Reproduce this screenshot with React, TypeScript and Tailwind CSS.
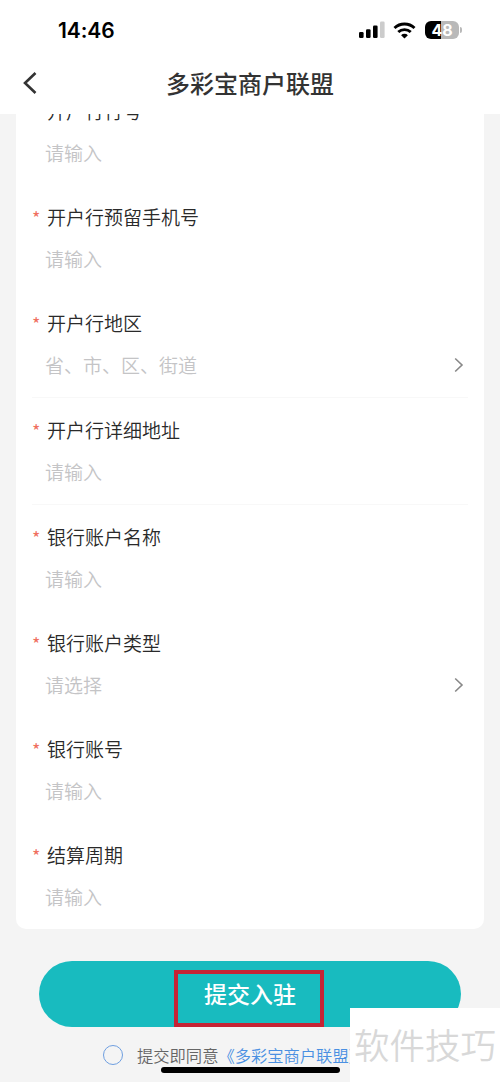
import React from 'react';

interface Field {
  label: string;
  placeholder: string;
  select?: boolean;
  divider?: boolean;
}

const fields: Field[] = [
  { label: '开户行行号', placeholder: '请输入' },
  { label: '开户行预留手机号', placeholder: '请输入' },
  { label: '开户行地区', placeholder: '省、市、区、街道', select: true, divider: true },
  { label: '开户行详细地址', placeholder: '请输入', divider: true },
  { label: '银行账户名称', placeholder: '请输入' },
  { label: '银行账户类型', placeholder: '请选择', select: true },
  { label: '银行账号', placeholder: '请输入' },
  { label: '结算周期', placeholder: '请输入' },
];

function StatusBar() {
  return (
    <div className="flex h-[60px] items-center justify-between pl-[58px] pr-[38px]">
      <span className="font-['Inter','Liberation_Sans',sans-serif] text-[21px] font-semibold leading-none tracking-[-0.1px] text-black">
        14:46
      </span>
      <div className="flex items-center">
        <svg width="26" height="18" viewBox="0 0 26 18">
          <rect x="0" y="11" width="4.6" height="6" rx="1.2" fill="#000" />
          <rect x="7" y="8.2" width="4.6" height="8.8" rx="1.2" fill="#000" />
          <rect x="14" y="4.6" width="4.6" height="12.4" rx="1.2" fill="#000" />
          <rect x="21" y="0.6" width="4.6" height="16.4" rx="1.2" fill="#ccc" />
        </svg>
        <svg className="ml-2" width="23" height="17" viewBox="0 0 24 18" fill="none" stroke="#000" strokeWidth="3">
          <path d="M1.4 6.4a15.2 15.2 0 0 1 21.2 0" />
          <path d="M5.4 10.7a9.5 9.5 0 0 1 13.2 0" />
          <path d="M12 17.4l-3.6-3.5a5.1 5.1 0 0 1 7.2 0z" fill="#000" stroke="none" />
        </svg>
        <div className="ml-[9px] flex h-[18px] w-[34px] items-center justify-center rounded-[6px] bg-linear-to-r from-black from-48% to-[#b9b9b9] to-48% font-['Inter','Liberation_Sans',sans-serif] text-[16px] font-bold leading-none text-white">
          48
        </div>
        <div className="ml-px h-[6px] w-[2px] rounded-r-full bg-[#b9b9b9]" />
      </div>
    </div>
  );
}

function FieldRow({ label, placeholder, select, divider }: Field) {
  return (
    <div className={`pt-[11px] pb-2.5 ${divider ? 'border-b border-[#f8f8f8]' : ''}`}>
      <div className="flex h-[42px] items-center text-[19px] font-[350] text-[#2a2a2a]">
        <span className="w-[15px] text-[18px] font-normal leading-none text-[#f0705f]">*</span>
        {label}
      </div>
      <div className="flex h-[43px] items-center justify-between pl-[13px] pr-1 text-[19px] font-[350] text-[#c4c4c6]">
        {placeholder}
        {select && (
          <svg className="-mt-0.5" width="10" height="16" viewBox="0 0 10 16" fill="none" stroke="#888" strokeWidth="1.6">
            <path d="M1.2 1.5L8 8l-6.8 6.5" />
          </svg>
        )}
      </div>
    </div>
  );
}

export default function App() {
  return (
    <div className="relative flex h-[1082px] w-[500px] flex-col overflow-hidden bg-[#f4f4f4] font-['Noto_Sans_CJK_SC',sans-serif]">
      <header className="z-10 h-[114px] shrink-0 bg-white">
        <StatusBar />
        <div className="grid h-[46px] grid-cols-[84px_1fr_84px] items-center">
          <svg className="ml-[23px]" width="14" height="22" viewBox="0 0 14 22" fill="none" stroke="#333" strokeWidth="2.6">
            <path d="M12.5 1L2 11l10.5 10" />
          </svg>
          <h1 className="text-center text-[24px] font-medium leading-none text-[#333]">多彩宝商户联盟</h1>
        </div>
      </header>

      <main className="-mt-[35px] mx-4 shrink-0 rounded-[10px] bg-white px-4">
        {fields.map((field) => (
          <FieldRow key={field.label} {...field} />
        ))}
      </main>

      <div className="mx-[39px] mt-8 shrink-0">
        <button className="relative h-[66px] w-full rounded-full bg-[#18bbbf] pb-px text-[23px] font-medium text-white">
          提交入驻
          <span className="absolute left-[135px] top-[9px] h-[57px] w-[150px] border-4 border-[#c62334]" />
        </button>
      </div>

      <div className="ml-[103px] mt-[18px] flex shrink-0 items-center whitespace-nowrap text-[16.3px] font-[350] leading-5 text-[#666]">
        <span className="mr-3.5 size-5 rounded-full border border-[#6f9fe0]" />
        提交即同意
        <span className="text-[#4a90e2]">《多彩宝商户联盟》</span>
      </div>

      <div className="absolute bottom-[9px] left-[161px] h-[6px] w-[179px] rounded-full bg-black" />
      <div className="absolute bottom-0 right-0 flex h-[74px] w-[150px] items-center justify-center bg-white pb-0.5 text-[35.5px] font-[350] leading-none text-[#d8d8d8]">
        软件技巧
      </div>
    </div>
  );
}
